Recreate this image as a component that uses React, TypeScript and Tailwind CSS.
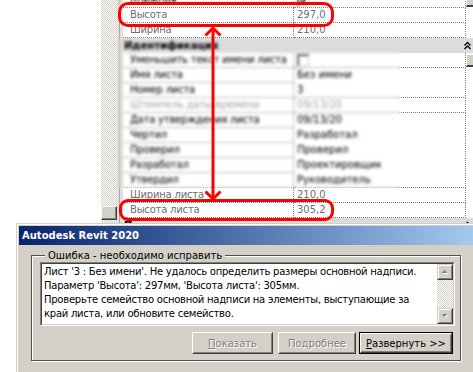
import React from 'react';

const dj = "font-['DejaVu_Sans',sans-serif]";
const checker =
  'bg-[image:repeating-conic-gradient(#d4d0c8_0%_25%,#ffffff_0%_50%)] bg-[length:2px_2px]';

type Row = {
  name: string;
  value?: string;
  header?: boolean;
  grey?: boolean;
  disabled?: boolean;
  check?: boolean;
  btn?: boolean;
  line?: boolean;
};

const rows: Row[] = [
  { name: 'Книжная', check: true, btn: true, line: true },
  { name: 'Высота', value: '297,0', grey: true, line: true },
  { name: 'Ширина', value: '210,0', grey: true, line: true },
  { name: 'Идентификация', header: true },
  { name: 'Уменьшить текст имени листа', check: true, btn: true, line: true },
  { name: 'Имя листа', value: 'Без имени' },
  { name: 'Номер листа', value: '3', line: true },
  { name: 'Штемпель даты/времени', value: '09/13/20', disabled: true, line: true },
  { name: 'Дата утверждения листа', value: '09/13/20' },
  { name: 'Чертил', value: 'Разработал' },
  { name: 'Проверил', value: 'Проверил' },
  { name: 'Разработал', value: 'Проектировщик' },
  { name: 'Утвердил', value: 'Руководитель', line: true },
  { name: 'Ширина листа', value: '210,0', grey: true, line: true },
  { name: 'Высота листа', value: '305,2', grey: true, line: true },
  { name: 'Прочее', header: true },
];

function Chevron() {
  return (
    <svg width="7" height="9" viewBox="0 0 7 9" className="block">
      <path d="M0.5 4.5 L3.5 1.5 L6.5 4.5 M0.5 8 L3.5 5 L6.5 8" stroke="#000" strokeWidth="1.4" fill="none" />
    </svg>
  );
}

function Check({ checked }: { checked?: boolean }) {
  return (
    <div className="w-[13px] h-[13px] border border-t-[#808080] border-l-[#808080] border-b-white border-r-white">
      <div className="w-full h-full border border-t-[#404040] border-l-[#404040] border-b-[#d4d0c8] border-r-[#d4d0c8] bg-white">
        {checked && (
          <svg width="9" height="9" viewBox="0 0 9 9" className="block">
            <path d="M1.5 3.5 L3.5 5.5 L7.5 1.5 L7.5 3.5 L3.5 7.5 L1.5 5.5 Z" fill="#000" />
          </svg>
        )}
      </div>
    </div>
  );
}

function PropRow({ r }: { r: Row }) {
  if (r.header) {
    return (
      <div className={`h-[15px] shrink-0 bg-[#dcdcdc] flex items-center justify-between pl-[1px] pr-[2px] ${dj} text-[10px] font-bold text-black`}>
        <span className="leading-[15px]">{r.name}</span>
        <Chevron />
      </div>
    );
  }
  const color = r.grey ? 'text-[#6e6e6e]' : r.disabled ? 'text-[#a8a8a8]' : 'text-black';
  return (
    <div className={`h-[15px] shrink-0 flex ${dj} text-[10px] ${color}`}>
      <div className="w-[171px] shrink-0 border-r border-b border-dotted border-[#808080] pl-[7px] leading-[14px] whitespace-nowrap overflow-hidden tracking-[-0.2px]">
        {r.name}
      </div>
      <div
        className={`w-[172px] shrink-0 border-r border-dotted border-[#808080] pl-[3px] leading-[14px] whitespace-nowrap overflow-hidden flex items-center ${
          r.line ? 'border-b' : 'border-b border-b-transparent'
        }`}
      >
        {r.check ? <Check checked={r.name === 'Книжная'} /> : r.value}
      </div>
      <div className="flex-1 pt-[1px]">
        {r.btn && (
          <div className="h-[13px] bg-[#d4d0c8] border-t border-l border-white border-b-2 border-b-[#404040]" />
        )}
      </div>
    </div>
  );
}

function ScrollBtn({ up }: { up?: boolean }) {
  return (
    <div className="w-[16px] h-[16px] bg-[#d4d0c8] border border-t-[#d4d0c8] border-l-[#d4d0c8] border-b-[#404040] border-r-[#404040]">
      <div className="w-full h-full border border-t-white border-l-white border-b-[#808080] border-r-[#808080] flex items-center justify-center">
        <svg width="8" height="6" viewBox="0 0 8 6" className="block">
          {up ? (
            <>
              <path d="M1.5 5 L4.5 2 L7.5 5 Z" fill="#ffffff" />
              <path d="M0.5 4 L3.5 1 L6.5 4 Z" fill="#808080" />
            </>
          ) : (
            <>
              <path d="M1.5 2 L7.5 2 L4.5 5 Z" fill="#ffffff" />
              <path d="M0.5 1 L6.5 1 L3.5 4 Z" fill="#808080" />
            </>
          )}
        </svg>
      </div>
    </div>
  );
}

function PushButton({
  children,
  w,
  disabled,
  def,
}: {
  children: React.ReactNode;
  w: string;
  disabled?: boolean;
  def?: boolean;
}) {
  const text = disabled ? 'text-[#808080] [text-shadow:1px_1px_0_#ffffff]' : 'text-black';
  const inner = (
    <div className="w-full h-full border border-t-white border-l-white border-b-[#404040] border-r-[#404040]">
      <div className={`w-full h-full border border-t-[#d4d0c8] border-l-[#d4d0c8] border-b-[#808080] border-r-[#808080] flex items-center justify-center ${dj} text-[10px] ${text}`}>
        {children}
      </div>
    </div>
  );
  return (
    <div className={`${w} h-[22px] shrink-0 bg-[#d4d0c8] ${def ? 'border border-black' : ''}`}>{inner}</div>
  );
}

export default function App() {
  return (
    <div className="relative w-[473px] h-[372px] overflow-hidden bg-white flex">
      {/* left blank area */}
      <div className="w-[101px] shrink-0 bg-white" />
      {/* vertical scrollbar */}
      <div className="w-[16px] shrink-0 flex flex-col">
        <div className={`h-[206px] shrink-0 ${checker}`} />
        <div className="h-[14px] shrink-0 bg-[#d4d0c8] border border-t-white border-l-white border-b-[#404040] border-r-[#404040]">
          <div className="w-full h-full border-b border-r border-[#808080]" />
        </div>
        <div className={`flex-1 ${checker}`} />
      </div>
      {/* gutter */}
      <div className="w-[6px] shrink-0 flex bg-[#e2e0da]">
        <div className="w-[2px]" />
        <div className="w-[1px] bg-[#a9a9a9]" />
      </div>
      {/* property grid */}
      <div className="flex-1 flex flex-col mt-[-7px]">
        {rows.map((r, i) => (
          <PropRow key={i} r={r} />
        ))}
      </div>

      {/* blurred redaction */}
      <div className="absolute left-[118px] top-[38px] w-[282px] h-[150px] backdrop-blur-[1.6px]" />
      <div className="absolute left-[118px] top-[0px] w-[200px] h-[7px] backdrop-blur-[1.2px]" />

      {/* red annotations */}
      <div className="absolute left-[118px] top-[2px] w-[216px] h-[25px] border-[3px] border-[#ff0000] rounded-[10px]" />
      <div className="absolute left-[119px] top-[199px] w-[215px] h-[22px] border-[3px] border-[#ff0000] rounded-[9px]" />
      <svg className="absolute left-[204px] top-[25px]" width="18" height="177" viewBox="0 0 18 177">
        <path d="M9 3 L9 174" stroke="#ff0000" strokeWidth="3" />
        <path d="M1.5 10.5 L9 3 L16.5 10.5" stroke="#ff0000" strokeWidth="3" fill="none" />
        <path d="M1.5 166.5 L9 174 L16.5 166.5" stroke="#ff0000" strokeWidth="3" fill="none" />
      </svg>

      {/* dialog */}
      <div className="absolute left-[16px] top-[223px] w-[462px] h-[160px] bg-[#d4d0c8] border-t border-l border-[#d4d0c8]">
        <div className="h-full border-t border-l border-white p-[1px]">
          <div className="h-[19px] bg-linear-to-r from-[#0a246a] to-[#a6caf0] flex items-center pl-[3px]">
            <span className={`${dj} font-bold text-[10px] text-white leading-[19px]`}>Autodesk Revit 2020</span>
          </div>
          <fieldset className="ml-[12px] mt-[4px] w-[430px] border border-[#505050] shadow-[inset_1px_1px_0_#ffffff,1px_1px_0_#ffffff] pl-[8px] pr-[4px] pb-[6px]">
            <legend className={`ml-[5px] px-[3px] leading-[13px] ${dj} text-[10px] text-black bg-[#d4d0c8]`}>
              Ошибка - необходимо исправить
            </legend>
            <div className="w-[415px] h-[64px] border border-t-[#808080] border-l-[#808080] border-b-white border-r-white">
              <div className="w-full h-full border border-t-[#404040] border-l-[#404040] border-b-[#d4d0c8] border-r-[#d4d0c8] bg-white flex">
                <div className={`flex-1 pl-[2px] pt-[1px] ${dj} text-[10px] leading-[14px] tracking-[-0.25px] text-black whitespace-nowrap overflow-hidden`}>
                  <div>Лист '3 : Без имени'. Не удалось определить размеры основной надписи.</div>
                  <div>Параметр 'Высота': 297мм, 'Высота листа': 305мм.</div>
                  <div>Проверьте семейство основной надписи на элементы, выступающие за</div>
                  <div>край листа, или обновите семейство.</div>
                </div>
                <div className="w-[16px] shrink-0 flex flex-col">
                  <ScrollBtn up />
                  <div className={`flex-1 ${checker}`} />
                  <ScrollBtn />
                </div>
              </div>
            </div>
            <div className="mt-[6px] flex justify-end pr-[3px]">
              <PushButton w="w-[81px]" disabled>
                <span>
                  <span className="underline">П</span>оказать
                </span>
              </PushButton>
              <div className="w-[5px]" />
              <PushButton w="w-[78px]" disabled>
                <span>
                  По<span className="underline">д</span>робнее
                </span>
              </PushButton>
              <div className="w-[3px]" />
              <PushButton w="w-[94px]" def>
                <span>
                  <span className="underline">Р</span>азвернуть &gt;&gt;
                </span>
              </PushButton>
            </div>
          </fieldset>
        </div>
      </div>
    </div>
  );
}
